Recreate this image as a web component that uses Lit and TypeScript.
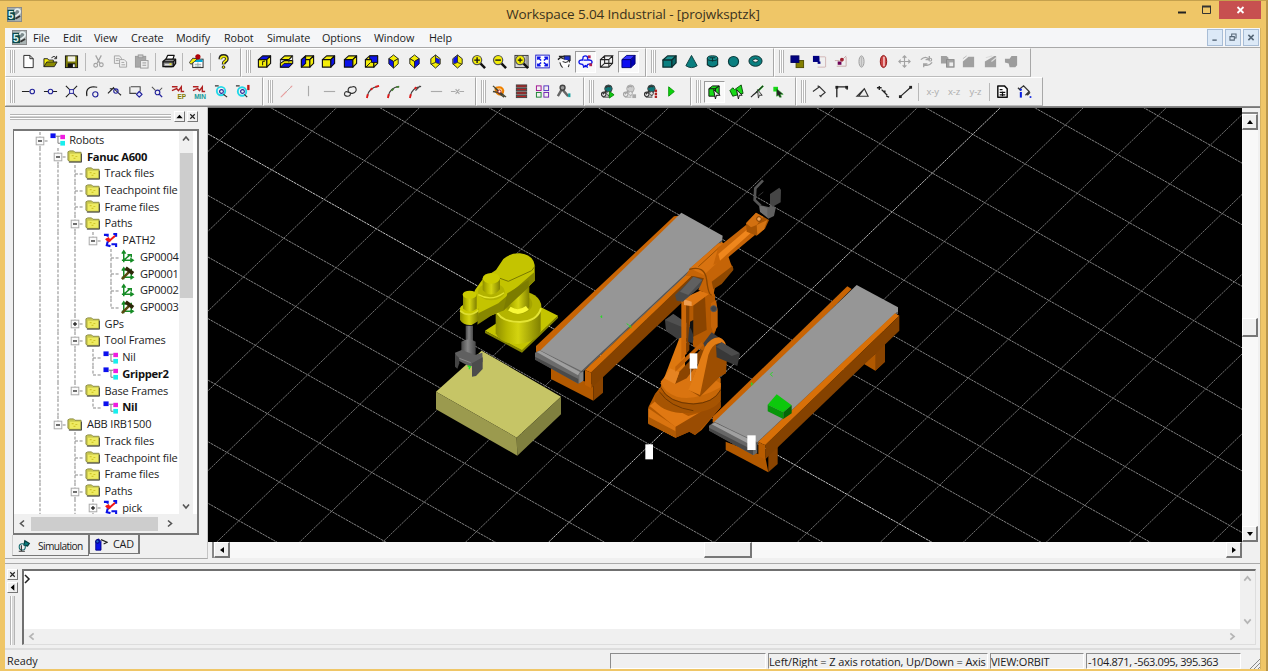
import { LitElement, html, svg, css, TemplateResult } from "lit";
import { customElement } from "lit/decorators.js";
import { classMap } from "lit/directives/class-map.js";

const P = (points: string, fill: string, stroke = "none", w = 1) =>
  svg`<polygon points=${points} fill=${fill} stroke=${stroke} stroke-width=${w} stroke-linejoin="round"></polygon>`;
const D = (d: string, stroke = "#111", w = 1.2, fill = "none") =>
  svg`<path d=${d} stroke=${stroke} stroke-width=${w} fill=${fill}></path>`;
const R = (x: number, y: number, w: number, h: number, fill: string, stroke = "none") =>
  svg`<rect x=${x} y=${y} width=${w} height=${h} fill=${fill} stroke=${stroke}></rect>`;
const C = (x: number, y: number, r: number, stroke = "#22229a", fill = "none", w = 1.2) =>
  svg`<circle cx=${x} cy=${y} r=${r} stroke=${stroke} fill=${fill} stroke-width=${w}></circle>`;
const T = (x: number, y: number, s: string, fill: string, size = 6) =>
  svg`<text x=${x} y=${y} fill=${fill} font-size=${size} font-weight="bold" font-family="Liberation Sans, sans-serif">${s}</text>`;

const Y = "#f4ee08";
const B = "#0a12e8";
const TEAL = "#0a7f80";
const GREY = "#a3a3a3";

const cube = (top: string, front: string, side: string, extra: unknown = "") => svg`
  ${P("1.5,6 6,2 14.5,2 10.5,6", top, "#111", 1.2)}${P("1.5,6 10.5,6 10.5,14 1.5,14", front, "#111", 1.2)}
  ${P("10.5,6 14.5,2 14.5,10 10.5,14", side, "#111", 1.2)}${extra}`;
const iso = (top: string, left: string, right: string) => svg`
  ${P("3,5 8,1 13,5 8,8", top, "#222", 1)}${P("3,5 8,8 8,15 3,10.5", left, "#222", 1)}
  ${P("8,8 13,5 13,10.5 8,15", right, "#222", 1)}`;
const lens = (inner: unknown) => svg`
  ${D("M9.5 9.5L15 15", "#111", 2.6)}${C(6.5, 6.5, 4.9, "#555", Y, 1.3)}${inner}`;
const robotGlyph = (c: string, mark: unknown) => svg`
  ${C(9, 5, 4, "#444", c, 1)}${D("M6 4Q8 1.5 11 3M7 7L3 11M11 8L9 13", "#333", 1.4)}${C(4, 11, 2.4, "#333", "none")}${C(9, 10, 2, "#444", "#ddd", 1)}${D("M3 14H10", "#555", 1.2)}${mark}`;

const ICONS: Record<string, unknown> = {
  app: svg`${R(0.5, 0.5, 15, 15, "#a9b3b3", "#888")}${R(0.5, 3, 8, 11, "#0c4a4c")}${D("M8 5q1-3.500 4-2.500t1.500 4l-4.500 3.500", "#e6eef0", 1.8, "#7b8a8c")}${T(1, 13, "5", "#d8f4f2", 11)}${D("M9 12.500L14 9.500", "#333", 1.8)}`,
  new: svg`${P("3,1.5 9.5,1.5 13,5 13,14.5 3,14.5", "#fff", "#222")}${D("M9.5 1.5V5H13", "#222", 1)}`,
  open: svg`${P("1,13.5 1,5 5,5 6,6.5 11,6.5 11,9", Y, "#222")}${P("1,13.5 4,8.5 15,8.5 12,13.5", "#8a8a00", "#222")}${D("M9 4q3-3 5 0M14.5 2V5H12", "#222", 1)}`,
  save: svg`${R(1.5, 2, 13, 12.5, "#7b7b08", "#111")}${R(4, 2.5, 8, 5.5, "#f2f2e8")}${R(4, 10, 8, 4.5, "#111")}${R(9.5, 11, 2, 3, "#eee")}`,
  cut: svg`${D("M5 1.5L9.5 10M11 1.5L6.5 10", GREY, 1.3)}${C(5, 12, 2, GREY)}${C(11, 11.5, 2, GREY)}`,
  copy: svg`${P("1.5,2 7,2 9,4.5 9,10 1.5,10", "#f0f0f0", GREY)}${P("7,6 12,6 14.5,8.5 14.5,14 7,14", "#f0f0f0", GREY)}${D("M3 5H7M3 7H6M9 9H12M9 11.5H13", GREY, 1)}`,
  paste: svg`${R(1.5, 2.5, 11, 11.5, "#a8a8a8", "#999")}${R(4.5, 1, 5, 3, "#ccc", "#999")}${R(7, 7, 8, 8, "#eee", "#999")}${D("M9 9.5H13M9 12H13", "#999", 1)}`,
  print: svg`${P("4,6 6,1.5 13,1.5 11.5,6", "#fff", "#111", 1.3)}${P("1,8 4,5.5 14.5,5.5 14.5,10 12,13.5 1,13.5", "#8a8a8a", "#111", 1.4)}${D("M1 8.500H12L14 6M12 9V13M3 13.500H11", "#111", 1.3)}${R(3, 10.5, 7, 1.6, "#ddd")}${R(8, 10, 2, 1.5, Y)}`,
  props: svg`${R(4, 5.5, 11, 9, "#fff", "#222")}${R(4.5, 6, 10, 2.5, "#00a9d8")}${D("M6 11H13M6 13H13M9.500 9V14", "#9aa", 1)}${D("M0.500 9L4 4.500L9 5L6 8L2 11Z", "#333", 1, Y)}${C(9.5, 3, 2.2, "#a00", "#b00010")}`,
  help: svg`${D("M4.6 5.5q0-3.5 3.5-3.5t3.5 3.2q0 1.8-1.8 2.8T8.1 11", "#222", 4)}${D("M4.8 5.5q0-3 3.4-3t3.2 2.8q0 1.5-1.8 2.4T8.1 10.6", Y, 1.7)}${C(8, 14, 1.4, "#222", Y, 1)}`,
  top: cube(B, Y, Y, D("M6 12V8L8.500 7.500", "#111", 1)),
  bottom: svg`${P("1.5,10 6,7 14.5,7 14.5,10 10.5,14 1.5,14", Y, "#111", 1.2)}${P("1.5,6 6,2 14.5,2 10.5,6", Y, "#111", 1.2)}${P("1.5,14 5.5,10 14.5,10 10.5,14", B, "#111", 1)}${D("M10.500 6V9M14.500 2V10M1.500 6V10", "#333", 1)}`,
  left: cube(Y, Y, Y, P("1.5,6 6,2 6,10 1.5,14", B, "#111", 1.1)),
  right: cube(Y, Y, B),
  front: cube(Y, B, Y),
  back: svg`${cube(Y, Y, Y)}${P("6,2 14.5,2 14.5,9 8,9 8,6 6,5", B, "#111")}${D("M2 14L7 9", "#111", 1)}`,
  iso1: iso(Y, B, Y), iso2: iso(Y, Y, B),
  iso3: svg`${P("8,1 13,5 13,10.5 8,15 3,10.5 3,5", Y, "#222")}${P("8,3.5 12.5,5.5 12.5,10.5 8,9", B)}${D("M8 1V9L3 11M8 9L13 11", "#333", 1)}`,
  iso4: svg`${P("8,1 13,5 13,10.5 8,15 3,10.5 3,5", Y, "#222")}${P("8,1.5 8,9 3.5,10 3.5,5", B)}${D("M8 1V9L3 11M8 9L13 11", "#333", 1)}`,
  zin: lens(D("M3.500 6.5H9.500M6.5 3.500V9.500", "#111", 1.4)),
  zout: lens(D("M3.500 6.5H9.500", "#111", 1.4)),
  zwin: svg`${R(1, 1.5, 14, 13, "#d8d8d8", "#333")}${D("M13 2V14", "#888", 1.2)}${lens(D("M4 6.5H9M6.5 4V9", "#111", 1.2))}`,
  zfit: svg`${R(0.8, 1.2, 14.4, 13.6, "#fff", "#1818c8")}${D("M3 6V3.5H6M3.5 4L6.5 7M13 6V3.5H10M12.5 4L9.5 7M3 10V12.5H6M3.5 12L6.5 9M13 10V12.5H10M12.5 12L9.5 9", B, 1.6)}`,
  rot: svg`${R(7.5, 2, 6.5, 5, "#1d2ec8", "#222")}${D("M2 2.500H8M1 6L4 3.500L7 5M13 7V9", "#222", 1.5)}${D("M4 13Q2 7 6 6.500L11 7Q14 10 12 14Z", "#fff", 1, "#fdfdfd")}${D("M3 9Q4 13 6 14.500M6 8L9 9L12 8M12 14L13 11", "#333", 1.2)}`,
  orbit: svg`${D("M1 8.500Q1 6 5 6.500L5.500 3Q8 1 10 3L10.500 6.500Q15 6 15 8.500T10.500 11L9 13.500H6L5 11Q1 11 1 8.500", B, 1.4, "#f4f4ff")}${R(10.5, 1.5, 3, 3, "#b02050")}${R(12, 10, 3, 3, "#b02050")}${D("M8 12L5.500 14.500M8 12L10.500 14.500M6 6.500H10", B, 1.2)}`,
  wire: svg`${D("M1.500 6H10.500V14H1.500ZM1.500 6L6 2H14.500L10.500 6M14.500 2V10L10.500 14M6 2V10H14.500M6 10L1.500 14", "#222", 1.1)}`,
  solid: svg`${P("1,6 6,1.5 15,1.5 10.5,6", "#3434ff", "#00007a")}${P("1,6 10.5,6 10.5,14.5 1,14.5", "#0d0df2", "#00007a")}${P("10.5,6 15,1.5 15,10.5 10.5,14.5", "#0000b4", "#00007a")}`,
  box: svg`${P("1,6.5 6,2 15,2 10.5,6.5", "#1b9090", "#0b2f30", 1.4)}${P("1,6.5 10.5,6.5 10.5,14 1,14", TEAL, "#0b2f30", 1.4)}${P("10.5,6.5 15,2 15,9.5 10.5,14", "#086768", "#0b2f30", 1.4)}`,
  cone: D("M8 1.5L2 12.500q6 4 12 0Z", "#0b3c3d", 1, TEAL),
  cyl: svg`${D("M2.500 4.5V11.5q5.500 4.500 11 0V4.5", "#0b2f30", 1.2, TEAL)}<ellipse cx="8" cy="4.5" rx="5.5" ry="2.6" fill="#158a8a" stroke="#0b2f30"></ellipse>${D("M8 4V8M5 4H11", "#0b2f30", 1)}`,
  sphere: C(8, 8, 5.4, "#0b3c3d", TEAL),
  torus: svg`<ellipse cx="8" cy="7.5" rx="7" ry="5.6" fill=${TEAL} stroke="#0b2f30"></ellipse><ellipse cx="8" cy="7" rx="2.8" ry="1.7" fill="#f0f0f0" stroke="#0b2f30"></ellipse>`,
  union: svg`${R(6.5, 7, 8, 7.5, "#847f00", "#4f4c00")}${R(1, 2, 8.5, 7, "#000080", "#000060")}`,
  diff: svg`${R(1, 2, 7, 6.5, "#000080")}${D("M8 3H14M14.5 3V14M6 14H14", "#d0b4b4", 1)}${R(6, 8, 3, 2.5, "#000080")}`,
  inter: svg`${D("M14 2L9 7M14 3V13H4M2 7H7", "#c9a9a9", 1)}${R(5, 8, 4, 3.5, "#6e0055")}${C(9.5, 6, 1.4, "#a02030", "#a02030")}`,
  shell: svg`<ellipse cx="8" cy="8" rx="2.7" ry="6" fill="#ddd" stroke="#999"></ellipse>${D("M8 3V13", "#bbb", 1.5)}`,
  shellr: svg`<ellipse cx="8" cy="8" rx="3.4" ry="6.5" fill="#c44" stroke="#8c1010"></ellipse>${D("M8.5 3V13", "#fbdada", 1.5)}`,
  move: D("M8 2V14M2 8H14M6 4L8 2L10 4M6 12L8 14L10 12M4 6L2 8L4 10M12 6L14 8L12 10", GREY, 1.2),
  turn: svg`${D("M2 6q5-5 9 0M11 2V6H7M14 9q-4 5-9 2M5 14V10.5H9", GREY, 1.4)}${C(12, 6, 1.5, GREY)}`,
  dup: svg`${P("1,2 7,2 9,4 9,10 1,10", "#a0a0a0")}${R(7, 6, 8, 8, "#a5a5a5", "#888")}${R(10, 9, 4, 4, "#eee")}`,
  ramp: svg`${P("2,14 2,8 8,3 14,3 14,14", "#a0a0a0")}${D("M2 5L6 2", "#bbb", 1)}`,
  ramp2: svg`${P("2,14 2,8 12,2 14,2 14,14", "#a0a0a0")}${D("M3 4L10 2M9 8L14 4", "#ddd", 1.2)}`,
  hand: P("1,5 6,5 8,2 14,2 14,12 12,14 6,14 5,10 1,9", "#9c9c9c"),

  s1: svg`${D("M1 8H9", "#222", 1.1)}${C(12, 8, 2.4)}`,
  s2: svg`${D("M1 8H5.5M10.5 8H15", "#222", 1.1)}${C(8, 8, 2.4)}`,
  s3: svg`${D("M2 2L14 14M14 2L2 14", "#222", 1.2)}${R(6, 6, 4, 4, "#efefff", "#22229a")}`,
  s4: svg`${D("M2 13Q0 3.500 9 3L13 3.500", "#222", 1.2)}${C(11, 11, 2.8)}`,
  s5: svg`${D("M1 10L7 4Q9 7 15 12M3 5H7", "#222", 1.2)}${C(9.5, 7.5, 2.3)}`,
  s6: svg`${D("M2 3V10H9M3 3H13V8", "#444", 1.1)}${P("12,8 15,11 12,14 9,11", "#dfe0ff", "#22229a", 1.3)}`,
  s7: svg`${D("M2 3Q4 5 6 7M13 4L10 7", "#555", 1.1)}${C(8, 9, 2.5)}${D("M10 11L13 14", "#22229a", 1.4)}`,
  s8: svg`${D("M1 3H7M1 7L6 5L8 7L11 3V8H14", "#b02020", 1.5)}${T(7, 15.5, "EP", "#857c00", 7)}`,
  s9: svg`${D("M1 3H7M1 7L6 5L8 7L11 3V8H14", "#b02020", 1.5)}${T(2.5, 15.5, "MIN", "#169a9a", 7)}`,
  s10: svg`${C(7.5, 7.5, 4.5, "#22d8e8", "none", 2)}${C(8, 8, 2)}${D("M1 2H5M10 11L14 14", "#333", 1.3)}`,
  s11: svg`${C(7.5, 8, 4.5, "#22d8e8", "none", 2)}${C(8, 8, 2)}${D("M1 2H5M10 11L13 14", "#333", 1.3)}${R(13, 1, 2.5, 5.5, "#c01818")}`,
  l1: svg`${D("M2 14L14 2", "#aaa", 1)}${D("M2 14L8 8M12 4L14 2", "#e9a0a0", 1.2)}`,
  l2: D("M8 2V13", "#aaa", 1.2),
  l3: D("M2 8H14", "#aaa", 1.2),
  l4: D("M1.500 11Q2 7 5 8.500T10 10Q14.500 9 14 5.500T10 3Q6 3 5.500 6T8 9.500Q8 13 5 13T1.500 11", "#333", 1.2),
  l5: svg`${D("M2.500 13Q4 4 14 2.500", "#444", 1.3)}${D("M2 15L3 11M6 6L8 4.500M11 3L15 2", "#e01818", 2)}`,
  l6: svg`${D("M2.500 13Q4 4 14 2.500", "#444", 1.3)}${D("M2 15L3 11", "#e01818", 2)}${D("M11 3L14 3M6 7L8 5", "#448030", 2)}`,
  l7: svg`${D("M2.500 13Q4 4 14 2.500M8 7L13 2", "#444", 1.3)}${D("M2 15L3 11M7 5L9 3.500", "#e01818", 2)}`,
  l9: D("M1 8H6M10 8H15M6 5.5L10 10.5M10 5.5L6 10.5", "#aaa", 1.2),
  g1: svg`${D("M4 4Q11 2 12 7Q12 12 7 11Q3 9 4 4", "#f08000", 2.2, "#ffd890")}${D("M1 2L15 14M1 8L6 9L13 14M3 4L11 12", "#443", 1.4)}${C(8, 8, 1.6, "#b02020", "#fff", 1)}`,
  g2: svg`${[1, 4.7, 8.4, 12.1].map((y) => svg`${R(2.5, y, 11, 2.4, "#b42222", "#444")}`)}`,
  g3: svg`${R(1.5, 2, 5, 5, "none", "#a01090")}${R(9.5, 2, 5, 5, "none", "#5030c0")}${R(1.5, 9, 5, 5, "none", "#188030")}${R(9.5, 9, 5, 5, "none", "#7020b0")}`,
  g4: svg`${D("M2 13L6 6M7 6L13 13", "#666", 2.6)}${C(7, 4, 2.6, "#444", "#999", 1.5)}${R(13, 10, 2.4, 4, "#18a0a0")}`,
  r1: robotGlyph("#0c7576", P("10,8 15,11.5 10,15", "#12c812", "#0a8a0a")),
  r2: svg`<g opacity=".4">${robotGlyph("#999", R(11, 11, 4, 4, "#444"))}</g>`,
  r3: robotGlyph("#0c7576", svg`${R(12.5, 6, 2.5, 2.5, "#b02020")}${R(12.5, 9.2, 2.5, 2.5, "#b02020")}${R(12.5, 12.4, 2.5, 2.5, "#b02020")}`),
  play: P("5,3 11,8 5,13", "#0bd30b", "#0a990a"),
  p1: svg`${P("2,5 6,2 13,2 13,11 9,13 2,13", "#18d818", "#111")}${D("M2 5H9V13M9 5L13 2", "#111", 1.1)}${P("7,6 14,12 10,12 9,16", "#eee", "#111")}`,
  p2: svg`${P("1,7 4,4 6,6 13,1 15,10 4,13", "#18d818", "#0a4d0a")}${P("8,6 14,12 11,12 10,16", "#eee", "#111")}`,
  p3: svg`${D("M7 9L14 2", "#18c818", 2)}${D("M1 14L14 2M3 12L8 8", "#222", 1.2)}${P("8,6 13,12 10,12 9,15", "#ddd", "#333")}`,
  p4: svg`${R(2.5, 3, 5, 5, "#18d818")}${P("6,5 13,11 10,11 11,14 9,14 8,12 6,13", "#222", "#18a818", 0.6)}`,
  q1: D("M1 8L8 3L14 9L9 13M10 14L8 12M6 2L8 3", "#333", 1.2),
  q2: svg`${D("M3 14V3H14V6", "#222", 1.4)}${R(1.5, 2, 3, 3, "#222")}${R(12, 2, 3, 3, "#222")}`,
  q3: D("M2 13H14L10 5ZM4 13L10 5", "#333", 1.2),
  q4: D("M1 4H6M3.5 2V6.5M6 6L12 12M8 7.500H9.500V9.500M11 13L14 14", "#222", 1.4),
  q5: svg`${D("M3 13L13 4", "#222", 1.2)}${R(1, 12, 3, 3, "#222")}${R(12, 2, 3, 3, "#222")}`,
  doc: svg`${P("3,2 10,2 13,5 13,14 3,14", "#fff", "#111", 1.6)}${D("M5 6H8M5 9H11M5 11.5H11M8 8V13", "#111", 1.3)}`,
  info: svg`${D("M2 6L7 2L13 8L9 12M1 4L4 7M11 12L14 9", "#333", 1.3)}${R(3, 8.5, 2.2, 6, "#0a20e0")}${R(3, 5, 2.2, 2, "#0a20e0")}${R(13.5, 13, 1.8, 1.8, "#0a20e0")}`,

  folder: svg`${P("1,3 3,2 7,2 8.5,3.5 15,3.5 15,13.5 3,13.5 1,12", "#c9c84e", "#8c8c45")}${R(3, 5, 11, 7.5, "#eeeb62")}${D("M5 7h2M9 8h2M7 10h2", "#d2c72a", 1.3)}${D("M2 14H15.5V5", "#444", 1)}`,
  net: svg`${R(0.5, 1.5, 5.5, 5, "#0c10ee")}${R(11, 3, 5, 4.6, "#f01ce0")}${R(11, 9.5, 5, 5, "#18eeee")}${D("M6 4.5H11M8.5 4.5V12H11", "#777", 1)}`,
  path: svg`${D("M3 6L6 9L13 3M5 5L8 9", "#f01818", 2.2)}${D("M1 2H5V4M11 1H14V4M5 9L4 13L8 14M9 12L14 12V15", B, 2.2)}`,
  frame: D("M4 14V3M2 5L4 2L6 5M2 12H13M11 10L14 12L11 14M4 12L11 6M8 6H12V9", "#168c26", 1.6),
  frameh: svg`${D("M4 14V3M2 5L4 2L6 5M2 12H13M11 10L14 12L11 14M12 3V14", "#168c26", 1.6)}${D("M2 14L10 6", "#5a4a10", 2.6)}${D("M6 2L14 8", "#2d2608", 4)}`,
  sim: svg`${D("M9 2L14 5L12 8L8 7Z", "#063e3e", 1.5, "#0a7f80")}${C(6, 9, 3.5, "#0a6668")}${D("M5 7V14M2 14H9", "#333", 1.3)}`,
  cad: svg`${D("M2 15V5L5 2L8 5V15Z", "#000080", 1, B)}${D("M8 3L15 6L11 8", "#222", 1.4)}${C(4, 5, 2, "#000080", "#26c")}`,
};

const icon = (name: string, cls = "ic") => html`<svg class=${cls} viewBox="0 0 16 16">${ICONS[name]}</svg>`;

interface Band { width: number; items: string }
const ROW1: Band[] = [
  { width: 236, items: "new open save | cut copy paste | print | props | help" },
  { width: 405, items: "top bottom left right front back iso1 iso2 iso3 iso4 zin zout zwin zfit rot *orbit wire *solid" },
  { width: 128, items: "box cone cyl sphere torus" },
  { width: 257, items: "union diff inter shell shellr move turn dup ramp ramp2 hand" },
];
const ROW2: Band[] = [
  { width: 258, items: "s1 s2 s3 s4 s5 s6 s7 s8 s9 s10 s11" },
  { width: 213, items: "l1 l2 l3 l4 l5 l6 l7 l3 l9" },
  { width: 108, items: "g1 g2 g3 g4" },
  { width: 107, items: "r1 r2 r3 play" },
  { width: 105, items: "*p1 p2 p3 p4" },
  { width: 247, items: "q1 q2 q3 q4 q5 | x-y x-z y-z | doc info" },
];

/* Guide characters: | line, t tee, l last, m/M open node, p closed node. */
const TREE: [string, string, string, boolean?][] = [
  ["m", "net", "Robots"],
  ["|m", "folder", "Fanuc A600", true],
  ["||t", "folder", "Track files"],
  ["||t", "folder", "Teachpoint file"],
  ["||t", "folder", "Frame files"],
  ["||m", "folder", "Paths"],
  ["|||M", "path", "PATH2"],
  ["||| t", "frame", "GP0004"],
  ["||| t", "frameh", "GP0001"],
  ["||| t", "frame", "GP0002"],
  ["||| l", "frameh", "GP0003"],
  ["||p", "folder", "GPs"],
  ["||m", "folder", "Tool Frames"],
  ["|||t", "net", "Nil"],
  ["|||l", "net", "Gripper2", true],
  ["||M", "folder", "Base Frames"],
  ["|| l", "net", "Nil", true],
  ["|M", "folder", "ABB IRB1500"],
  ["| t", "folder", "Track files"],
  ["| t", "folder", "Teachpoint file"],
  ["| t", "folder", "Frame files"],
  ["| m", "folder", "Paths"],
  ["| |p", "path", "pick"],
];

const guide = (c: string): TemplateResult => {
  const dash = (d: string) => svg`<path d=${d} stroke="#888" stroke-width="1" stroke-dasharray="3 1.6" fill="none"></path>`;
  const isBox = "mMp".includes(c);
  return html`<svg class="guide" viewBox="0 0 17.7 16.73">
    ${"|tmp".includes(c) ? dash("M9 0V16.73") : ""}
    ${"lM".includes(c) ? dash("M9 0V9") : ""}
    ${"tlmMp".includes(c) ? dash("M9 9H17.7") : ""}
    ${isBox ? svg`<rect x="5.2" y="5.2" width="7.6" height="7.6" fill="#fafafa" stroke="#aaa"></rect><path d="M7 9H11" stroke="#111" stroke-width="1.2"></path>` : ""}
    ${c === "p" ? svg`<path d="M9 7V11" stroke="#111" stroke-width="1.2"></path>` : ""}
  </svg>`;
};

/* Floor grid: an orthographic lattice with origin O and unit steps U, V. */
const O = [561.7, 210.3], U = [52.3, 29.5], V = [-40.35, 38.8];
const at = (i: number, j: number) => `${(O[0] + i * U[0] + j * V[0]).toFixed(1)} ${(O[1] + i * U[1] + j * V[1]).toFixed(1)}`;
const gridLines = () => {
  const out: unknown[] = [];
  for (let j = -20; j <= 20; j++)
    out.push(svg`<path d="M${at(-25, j)}L${at(30, j)}" stroke=${j === 2 ? "#c8c8c8" : "#848484"} stroke-dasharray="2.4 .7"></path>`);
  for (let i = -20; i <= 25; i++)
    out.push(svg`<path d="M${at(i, -25)}L${at(i, 25)}" stroke=${i === 4 ? "#b8b8b8" : "#707070"} stroke-dasharray="2.4 .7"></path>`);
  return out;
};

const conveyor1 = svg`<g transform="translate(420 170) scale(.33333)">
  ${P("393,595 497,635 520,645 520,692 393,627", "#b25900")}
  ${P("520,645 549,610 549,668 520,692", "#8a4400")}
  ${P("348,528 762,139 775,137 785,145 365,550 348,545", "#c86404")}
  ${P("360,542 784,128 908,197 906,217 487,607", "#969696")}
  ${P("345,548 360,541 490,606 490,630 475,641 345,568", "#6b6b6b")}
  ${P("350,546 360,542 480,606 474,616", "#a0a0a0")}
  ${P("345,560 475,627 475,641 345,569", "#4a4a4a")}
  ${P("478,612 490,603 490,632 478,640", "#858585")}
  ${D("M484 606L906 212", "#555", 4)}
  ${P("495,600 905,215 915,224 514,608", "#d87008")}
  ${P("514,606 915,222 915,275 514,655", "#854200")}
  ${P("495,600 514,608 514,655 495,645", "#c06002")}
  ${D("M545 436v8M541 440h5M620 461l6 4M627 466l8 8M632 466l-5 6", "#28d828", 3)}
</g>`;

const conveyor2 = svg`<g>
  ${P("672,582 712,545 735,515 735,575 706,602", "#b25900")}
  ${P("706,545 735,512 735,575 706,602", "#8a4400")}
  ${P("257,815 355,852 376,862 385,907 257,839", "#b25900")}
  ${P("385,855 413,825 413,882 385,907", "#8a4400")}
  ${P("218,740 622,349 635,357 230,764 218,757", "#c86404")}
  ${P("223,755 650,345 774,412 774,430 352,822", "#969696")}
  ${P("207,767 223,755 352,817 352,848 340,856 207,781", "#686868")}
  ${P("215,763 225,758 345,816 337,827", "#a0a0a0")}
  ${P("207,773 339,840 339,855 207,782", "#484848")}
  ${D("M349 822L773 427", "#555", 4)}
  ${P("355,815 765,430 778,437 376,826", "#d87008")}
  ${P("376,824 778,437 778,482 376,868", "#854200")}
  ${P("355,815 376,826 376,868 355,858", "#b85c00")}
  ${P("383,704 410,673 455,706 430,727", "#0cc80c")}
  ${P("383,704 430,727 430,747 383,724", "#07960a")}
  ${P("430,727 455,706 455,730 430,747", "#056806")}
  ${D("M398 606l-7 7 7 6M335 637v10M332 642h8", "#28d828", 3)}
</g>`;

const yellowRobot = svg`<g transform="translate(420 170) scale(.33333)">
  ${P("48,665 185,542 423,680 290,803", "#c6c566")}
  ${P("48,665 290,803 292,857 48,718", "#9b9a4e")}
  ${P("290,803 423,680 423,733 292,857", "#80803f")}
  ${P("195,482 330,395 414,437 306,542", "#c4c400")}
  ${P("195,482 306,540 414,437 414,444 306,548 195,489", "#858500")}
  ${D("M227 430V490Q240 520 290 522Q350 518 362 482V410Z", "none", 0, "url(#yel)")}
  <ellipse cx="296" cy="410" rx="68" ry="48" fill="#b4b400"></ellipse>
  ${D("M228 420Q240 456 300 456Q352 454 363 415", "#e4e434", 6)}
  <ellipse cx="295" cy="402" rx="42" ry="30" fill="#a4a400"></ellipse>
  ${D("M262 350V415Q290 440 328 412V340Z", "none", 0, "url(#yel)")}
  ${D("M268 416Q295 434 322 414", "#f8f838", 14)}
  ${D("M228 300L250 267Q270 249 300 250Q340 255 344 285V332L250 422L210 438L150 445V405L165 360L190 325Z", "none", 0, "#c4c400")}
  ${P("235,400 344,305 344,332 250,422 218,434 172,464 175,430", "#878700")}
  ${P("262,370 326,330 326,352 250,422", "#7c7c00")}
  ${D("M232 322L265 334L335 302L344 290", "#777700", 3)}
  <ellipse cx="214" cy="365" rx="40" ry="26" fill="#b2b200"></ellipse>
  ${D("M175 374Q215 396 252 368", "#e4e42c", 4)}
  ${D("M188 325V360Q214 388 240 358V325Z", "none", 0, "url(#yel)")}
  <ellipse cx="214" cy="325" rx="26" ry="16" fill="#cccc00"></ellipse>
  ${D("M120 414V450Q130 467 155 465L175 453V414Z", "none", 0, "url(#yel)")}
  <ellipse cx="148" cy="416" rx="28" ry="15" fill="#c9c900"></ellipse>
  ${D("M120 422Q145 445 175 421", "#dede30", 5)}
  ${D("M129 373V416Q150 433 170 416V373Z", "none", 0, "url(#yel)")}
  <ellipse cx="149" cy="374" rx="21" ry="12" fill="#cccc00"></ellipse>
  ${R(137, 467, 22, 52, "url(#gry)")}
  ${D("M124 515Q147 500 167 515V560L145 570L124 555Z", "none", 0, "url(#gry)")}
  ${P("105,548 125,540 165,555 187,548 188,575 150,590 108,568", "#606060")}
  ${P("105,552 118,565 118,580 112,596 105,590", "#444")}
  ${P("156,580 188,562 188,597 168,618 156,620", "#4c4c4c")}
  ${D("M118 565L152 578", "#8c8c8c", 3)}
  ${D("M143 588l10 3M148 588v10", "#28e828", 4)}
</g>`;

const orangeRobot = svg`<g>
  ${P("25,712 45,672 62,650 90,590 242,640 242,712 185,780 165,795 148,785 107,803 25,760", "#b25800")}
  ${P("29,708 50,690 145,738 200,722 107,772", "#e07812")}
  ${P("25,715 107,770 107,803 25,760", "#da7410")}
  ${P("25,740 107,784 107,803 25,762", "#b05a04")}
  ${P("107,770 225,700 242,695 242,712 180,780 165,795 148,785 107,803", "#9a4c02")}
  ${D("M45 672V695Q80 735 160 728Q225 722 242 690V640Z", "none", 0, "#a65402")}
  ${D("M62 640Q70 690 150 700Q225 700 242 655V625L150 590L90 600Z", "none", 0, "#c86808")}
  ${D("M62 635Q70 665 110 680Q165 695 242 652V640L150 590L90 600Z", "none", 0, "#da7410")}
  ${D("M62 652Q85 700 160 702Q220 700 242 660M58 665Q90 712 160 722", "#6e3600", 3)}
  ${P("75,450 100,432 150,470 150,500 120,512 78,482", "#3e3e3e")}
  ${P("75,450 100,432 150,465 135,475", "#505050")}
  ${P("72,625 118,505 135,500 135,600 105,642", "#de780f")}
  ${P("105,642 118,605 190,530 190,560 140,625", "#8b4400")}
  ${P("72,625 90,595 118,607 105,642", "#e68422")}
  ${P("145,385 212,355 225,375 228,480 200,545 160,530 145,450", "#b55a02")}
  ${P("160,400 195,380 200,480 160,500", "#8a4400")}
  ${P("124,390 140,395 140,550 124,570", "#cc6808")}
  ${P("140,395 148,392 148,540 140,550", "#834000")}
  ${P("213,400 228,390 233,420 233,470 220,488 213,470", "#c56407")}
  ${P("150,455 160,450 160,500 150,490", "#111")}
  ${C(221, 416, 9, "#555", "#3f4246", 3)}
  ${P("190,520 215,487 240,505 235,545 205,560", "#3e3e40")}
  ${D("M148 470Q165 490 158 520L144 515Z", "none", 0, "#34363a")}
  ${D("M147 660L190 540Q210 502 237 502Q258 510 262 550L258 610L240 620L180 680Z", "none", 0, "#9d4e01")}
  ${D("M145 660L195 530Q215 500 240 503Q255 510 258 525L235 520Q215 525 205 555L180 675Z", "none", 0, "#e27c14")}
  ${P("106,590 185,515 190,525 106,605", "#c26207")}
  ${P("228,525 245,517 300,552 292,588 230,562", "#383838")}
  ${P("228,530 245,517 300,550 275,558", "#4c4c4c")}
  ${P("130,385 180,362 210,370 158,408 135,405", "#de7611")}
  ${P("132,388 155,395 155,408 132,405", "#ef9e50")}
  ${P("105,375 160,320 187,328 182,350 128,395 110,392", "#4a4a4a")}
  ${P("120,365 160,320 187,330 145,375", "#606060")}
  ${D("M137 318L150 295L235 220Q250 218 255 230L272 280L280 297L245 340L225 350L220 378L175 360L192 325L160 318Z", "none", 0, "#c56407")}
  ${P("150,295 237,220 255,227 240,270 192,315", "#d97310")}
  ${D("M148 298Q195 285 200 330T215 375", "#8a4600", 4)}
  ${D("M175 290L238 232", "#9a5004", 3)}
  ${P("215,335 278,287 280,300 245,342 220,358", "#8f4800")}
  ${P("235,232 318,165 345,195 262,264 220,285", "#c66407")}
  ${P("235,252 322,178 333,188 240,272", "#ef861c")}
  ${P("318,160 348,128 387,150 375,176 350,197 320,185", "#a85402")}
  ${P("318,160 348,128 370,140 350,165 333,172", "#d27010")}
  ${P("350,165 382,150 372,178 352,195", "#d57412")}
  ${C(357, 147, 7, "#7a3c00", "#f4a657", 3)}
  ${P("358,105 388,112 392,100 407,115 402,138 385,146 360,125", "#606060")}
  ${P("358,105 382,115 382,142 360,125", "#707070")}
  ${P("390,72 418,53 423,60 422,97 398,110 390,100", "#454545")}
  ${D("M369 31L346 55L344 90L362 107", "#565656", 8)}
  ${D("M370 66L355 78", "#333", 3)}
  ${D("M152 595V633", "#ddd", 2.5)}
  ${R(149, 550, 23, 46, "#fff")}
</g>`;

@customElement("app-root")
export class AppRoot extends LitElement {
  static styles = css`
    :host { display: block; width: 1268px; height: 671px; overflow: hidden; font: 11px/14px "Open Sans", "Noto Sans", sans-serif; color: #1b1b22; }
    * { box-sizing: border-box; }
    svg { display: block; }
    .window { height: 671px; background: #efc667; border-top: 1px solid #c5a14d; border-right: 2px solid #b8964a; padding: 0 5px 2px 5px; display: flex; flex-direction: column; }
    .title { height: 27px; flex: none; display: grid; grid-template-columns: 400px 1fr 400px; padding-left: 2px; align-items: center; }
    .title h1 { margin: 0 2px 2px 0; font-weight: 400; font-size: 13.5px; letter-spacing: -.13px; text-align: center; white-space: nowrap; color: #3b321d; }
    .title .ic { width: 15px; height: 15px; }
    .caption { display: flex; justify-content: flex-end; align-self: start; align-items: flex-start; padding-right: 0; }
    .caption svg { width: 25px; height: 18px; }
    .close { background: #c75050; width: 42px; height: 18px; display: grid; place-items: center; }
    .client { flex: 1; min-height: 0; background: #f0f0f0; display: flex; flex-direction: column; border-right: 1px solid #d6b360; }
    .menu { height: 20px; flex: none; background: #f5f6f8; border-bottom: 1px solid #a9a9a9; display: flex; align-items: center; padding-left: 7px; justify-content: space-between; }
    .menu .names { display: grid; grid-template-columns: 30px 31px 37px 45px 48px 43px 55px 52px 55px 40px; margin-left: 6px; flex: 1; font-size: 10.8px; letter-spacing: -.1px; }
    .menu .ic { width: 15px; height: 15px; }
    .mdi { display: flex; gap: 2px; padding-right: 1px; }
    .mdi svg { width: 16px; height: 17px; background: #dce9f7; border: 1px solid #a8bdd6; }
    .bars { height: 59px; flex: none; display: flex; flex-direction: column; border-bottom: 1px solid #888; }
    .barrow { display: flex; height: 29px; }
    .band { display: flex; align-items: center; height: 29px; padding-left: 4px; border-right: 1px solid #a8a8a8; border-bottom: 1px solid #bcbcbc; border-top: 1px solid #fff; border-left: 1px solid #fff; }
    .barrow:first-child .band { padding-bottom: 2px; }
    .grip { width: 5px; height: 23px; margin-right: 3px; border: 1px solid #b4b4b4; border-width: 0 1px; background: linear-gradient(90deg, #fff 1px, #bbb 1px, #bbb 2px, #fff 2px); flex: none; }
    .tool { width: 21.4px; height: 22px; display: grid; place-items: center; flex: none; font-size: 9.5px; color: #adadad; letter-spacing: -.2px; white-space: nowrap; }
    .tool.on { background: #f9f9f9; border: 1px solid #fff; border-top-color: #9a9a9a; border-left-color: #9a9a9a; }
    .ic { width: 15px; height: 15px; flex: none; }
    .sep { width: 6px; height: 18px; flex: none; display: flex; justify-content: center; }
    .sep::before { content: ""; width: 1px; background: #b8b8b8; }
    .main { height: 452px; flex: none; display: flex; }
    .panel { width: 203px; flex: none; padding: 4px 9px 0 5px; border-right: 1px solid #c4c4c4; border-bottom: 1px solid #aaa; }
    .phead { display: flex; gap: 2px; align-items: center; height: 11px; justify-content: flex-end; }
    .lines { flex: 1; height: 6px; border: 1px solid #b5b5b5; border-width: 1px 0; background: linear-gradient(#fff 1px, #f0f0f0 1px, #b5b5b5 2px, #b5b5b5 3px, #fff 3px); margin-right: 1px; }
    .mini { width: 11px; height: 11px; background: #f0f0f0; border: 1px solid #fff; border-right-color: #777; border-bottom-color: #777; flex: none; }
    .tree { margin: 7px 0 0 3px; width: 186px; height: 406px; border: 1px solid #777; border-width: 2px 2px 2px 1px; background: #fff; display: grid; grid-template: 383px 1fr / 1fr 14px; overflow: hidden; padding-right: 4px; }
    .rows { overflow: hidden; padding: .5px 0 0 17px; min-width: 0; }
    .row { display: flex; align-items: center; height: 16.73px; white-space: nowrap; font-size: 11px; letter-spacing: -.16px; }
    .row .ic { margin: 0 4.5px 0 1px; }
    .row b { font-size: 11.2px; letter-spacing: -.3px; color: #111; }
    .guide { width: 17.7px; height: 16.73px; flex: none; }
    .vs { background: #f0f0f0; display: flex; flex-direction: column; align-items: center; justify-content: space-between; }
    .vs svg, .hs svg { width: 14px; height: 15px; flex: none; }
    .vthumb { width: 13px; height: 145px; background: #cdcdcd; margin: 7px 0 auto; }
    .hs { background: #f0f0f0; display: flex; grid-column: 1 / -1; align-items: center; justify-content: space-between; padding: 0 20px 0 1px; margin-right: -4px; }
    .hthumb { height: 14px; width: 127px; background: #cdcdcd; margin-right: auto; margin-left: 2px; }
    .tabs { display: flex; align-items: flex-start; padding-left: 2px; }
    .tab { display: flex; align-items: center; height: 19px; border: 1px solid #777; border-top: 0; border-right-width: 2px; padding: 0 4px 0 4px; gap: 5px; width: 51px; font-size: 10.8px; letter-spacing: -.25px; }
    .tab.cur { width: 77px; height: 21px; border-left-color: #ccc; border-right-width: 1px; padding: 2px 2px 0 4px; gap: 7px; font-size: 10.2px; letter-spacing: -.6px; }
    .tab .ic { width: 14px; height: 14px; }
    .view { flex: 1; display: grid; grid-template: 434px 18px / 1034px 1fr; border-top: 1px solid #777; }
    .scene { width: 1034px; height: 434px; background: #000; }
    .vbar { display: flex; flex-direction: column; background: #f8f8f8; width: 16px; }
    .hbar { display: flex; background: #f8f8f8; height: 16px; }
    .btn { width: 16px; height: 16px; background: #f0f0f0; border: 1px solid #fff; border-right: 2px solid #777; border-bottom: 2px solid #777; flex: none; display: grid; place-items: center; }
    .btn svg { width: 10px; height: 10px; }
    .split { height: 6px; background: #f0f0f0; border-bottom: 2px solid #888; flex: none; }
    .hsplit { width: 6px; background: #f0f0f0; border-right: 2px solid #888; flex: none; }
    .vgrab { margin: 188px 0 auto; height: 19px; }
    .hgrab { margin: 0 auto 0 474px; width: 48px; }
    .console { flex: 1; min-height: 0; margin-top: 4px; border-top: 1px solid #aaa; display: flex; padding: 5px 4px 3px 2px; border-bottom: 2px solid #ddd; }
    .gutter { width: 14px; display: flex; flex-direction: column; gap: 2px; flex: none; }
    .vlines { width: 5px; flex: 1; margin: 1px 0 0 3px; border: 1px solid #b5b5b5; border-width: 0 1px; background: linear-gradient(90deg, #fff 1px, #f0f0f0 1px, #bbb 2px, #fff 3px); }
    .out { flex: 1; border: 1px solid #ddd; border-top: 2px solid #707070; border-left: 2px solid #707070; background: #fff; display: grid; grid-template: 1fr 15px / 1fr 15px; margin-left: 1px; }
    .out .prompt { padding: 1px 0; }
    .out svg { width: 15px; height: 15px; }
    .out .prompt svg { width: 7px; height: 14px; }
    .out .vs { padding: 0; }
    .out .hs { padding: 0 15px 0 0; margin: 0; }
    .status { height: 19px; flex: none; display: flex; align-items: flex-end; padding-left: 2px; font-size: 11px; }
    .status .ready { width: 603px; height: 16px; font-size: 10.8px; line-height: 16px; }
    .pane { height: 16px; border: 1px solid #fff; border-top-color: #8c8c8c; border-left-color: #8c8c8c; margin-right: 2px; padding: 0; overflow: hidden; white-space: nowrap; line-height: 15px; }
    .w1 { width: 156px; } .w2 { width: 220px; letter-spacing: -.12px; } .w3 { width: 94px; letter-spacing: -.2px; } .w4 { width: 155px; letter-spacing: -.38px; padding-left: 1px; }
    .size { width: 12px; height: 12px; margin-left: auto; }
  `;

  private band(b: Band) {
    return html`<div class="band" style="width:${b.width}px"><div class="grip"></div>${b.items.split(" ").map((n) => {
      if (n === "|") return html`<div class="sep"></div>`;
      const on = n.startsWith("*");
      const name = on ? n.slice(1) : n;
      return html`<div class=${classMap({ tool: true, on })}>${ICONS[name] ? icon(name) : name}</div>`;
    })}</div>`;
  }

  private chevron(d: string, color = "#555") {
    return html`<svg viewBox="0 0 14 14"><path d=${d} fill="none" stroke=${color} stroke-width="1.6"></path></svg>`;
  }

  private arrow(points: string, cls = "") {
    return html`<div class="btn ${cls}"><svg viewBox="0 0 10 10"><polygon points=${points} fill="#000"></polygon></svg></div>`;
  }

  render() {
    const names = ["File", "Edit", "View", "Create", "Modify", "Robot", "Simulate", "Options", "Window", "Help"];
    const up = "M4 9L7 5.5L10 9", down = "M4 5L7 8.5L10 5", left = "M9 4L5.5 7L9 10", right = "M5 4L8.5 7L5 10";
    return html`<div class="window">
      <header class="title">
        ${icon("app")}
        <h1>Workspace 5.04 Industrial - [projwksptzk]</h1>
        <div class="caption">
          <svg viewBox="0 0 25 18"><path d="M9 11.5H17" stroke="#222" stroke-width="2"></path></svg>
          <svg viewBox="0 0 25 18"><path d="M8.5 5V12.5H16.5V5" fill="none" stroke="#333"></path><path d="M8 5.5H17" stroke="#333" stroke-width="2"></path></svg>
          <div class="close"><svg viewBox="0 0 25 18"><path d="M9.5 6L15.5 12M15.5 6L9.5 12" stroke="#fff" stroke-width="1.8"></path></svg></div>
        </div>
      </header>
      <div class="client">
        <nav class="menu">${icon("app")}
          <div class="names">${names.map((n) => html`<span>${n}</span>`)}</div>
          <div class="mdi">
            <svg viewBox="0 0 16 17"><path d="M5 11.5H10" stroke="#567" stroke-width="1.6"></path></svg>
            <svg viewBox="0 0 16 17"><path d="M4.5 7.5H9.5V11.5H4.5ZM6.5 7V4.5H11.5V9H10" fill="none" stroke="#567" stroke-width="1.2"></path></svg>
            <svg viewBox="0 0 16 17"><path d="M5 5.5L11 11.5M11 5.5L5 11.5" stroke="#567" stroke-width="1.8"></path></svg>
          </div>
        </nav>
        <div class="bars">
          <div class="barrow">${ROW1.map((b) => this.band(b))}</div>
          <div class="barrow">${ROW2.map((b) => this.band(b))}</div>
        </div>
        <div class="main">
          <aside class="panel">
            <div class="phead"><div class="lines"></div>
              <svg class="mini" viewBox="0 0 10 10"><path d="M1.5 7L5 3L8.500 7Z"></path></svg>
              <svg class="mini" viewBox="0 0 10 10"><path d="M2.500 2.500L7.500 7.500M7.500 2.500L2.500 7.500" stroke="#222" stroke-width="1.3"></path></svg>
            </div>
            <div class="tree">
              <div class="rows">${TREE.map(([g, ic, label, bold]) => html`<div class="row">
                ${[...g].map(guide)}${icon(ic)}${bold ? html`<b>${label}</b>` : html`<span>${label}</span>`}</div>`)}</div>
              <div class="vs">${this.chevron(up)}<div class="vthumb"></div>${this.chevron(down)}</div>
              <div class="hs">${this.chevron(left)}<div class="hthumb"></div>${this.chevron(right)}</div>
            </div>
            <div class="tabs">
              <div class="tab cur">${icon("sim")}Simulation</div>
              <div class="tab">${icon("cad")}CAD</div>
            </div>
          </aside>
          <section class="view">
            <svg class="scene" viewBox="208 108 1034 434">
              <defs>
                <linearGradient id="yel"><stop offset="0" stop-color="#8e8e00"></stop><stop offset=".25" stop-color="#b8b800"></stop><stop offset=".5" stop-color="#d4d410"></stop><stop offset="1" stop-color="#808000"></stop></linearGradient>
                <linearGradient id="gry"><stop offset="0" stop-color="#484848"></stop><stop offset=".45" stop-color="#858585"></stop><stop offset="1" stop-color="#484848"></stop></linearGradient>
              </defs>
              ${gridLines()}${conveyor1}${yellowRobot}
              <g transform="translate(640 170) scale(.33333)">${orangeRobot}${conveyor2}
                <rect x="16" y="823" width="23" height="45" fill="#fff"></rect>
                <rect x="322" y="796" width="25" height="44" fill="#fff"></rect>
              </g>
            </svg>
            <div class="vbar"><div class="split"></div>${this.arrow("5,3 8,7 2,7")}<div class="btn vgrab"></div>${this.arrow("2,3 8,3 5,7")}</div>
            <div class="hbar"><div class="hsplit"></div>${this.arrow("3,5 7,2 7,8")}<div class="btn hgrab"></div>${this.arrow("3,2 7,5 3,8")}</div>
          </section>
        </div>
        <section class="console">
          <div class="gutter">
            <svg class="mini" viewBox="0 0 10 10"><path d="M2.500 2.500L7.500 7.500M7.500 2.500L2.500 7.500" stroke="#222" stroke-width="1.3"></path></svg>
            <svg class="mini" viewBox="0 0 10 10"><path d="M7 1.500L3 5L7 8.500Z"></path></svg>
            <div class="vlines"></div>
          </div>
          <div class="out">
            <div class="prompt"><svg viewBox="0 0 7 14"><path d="M1 3L5 7L1 11" fill="none" stroke="#222" stroke-width="1.500"></path></svg></div>
            <div class="vs">${this.chevron(up, "#b5b5b5")}${this.chevron(down, "#b5b5b5")}</div>
            <div class="hs">${this.chevron(left, "#b5b5b5")}${this.chevron(right, "#b5b5b5")}</div>
          </div>
        </section>
        <footer class="status">
          <div class="ready">Ready</div>
          <div class="pane w1"></div>
          <div class="pane w2">Left/Right = Z axis rotation, Up/Down = Axis</div>
          <div class="pane w3">VIEW:ORBIT</div>
          <div class="pane w4">-104.871, -563.095, 395.363</div>
          <svg class="size" viewBox="0 0 12 12"><path d="M2 12L12 2M6 12L12 6M10 12L12 10" stroke="#888"></path></svg>
        </footer>
      </div>
    </div>`;
  }
}
